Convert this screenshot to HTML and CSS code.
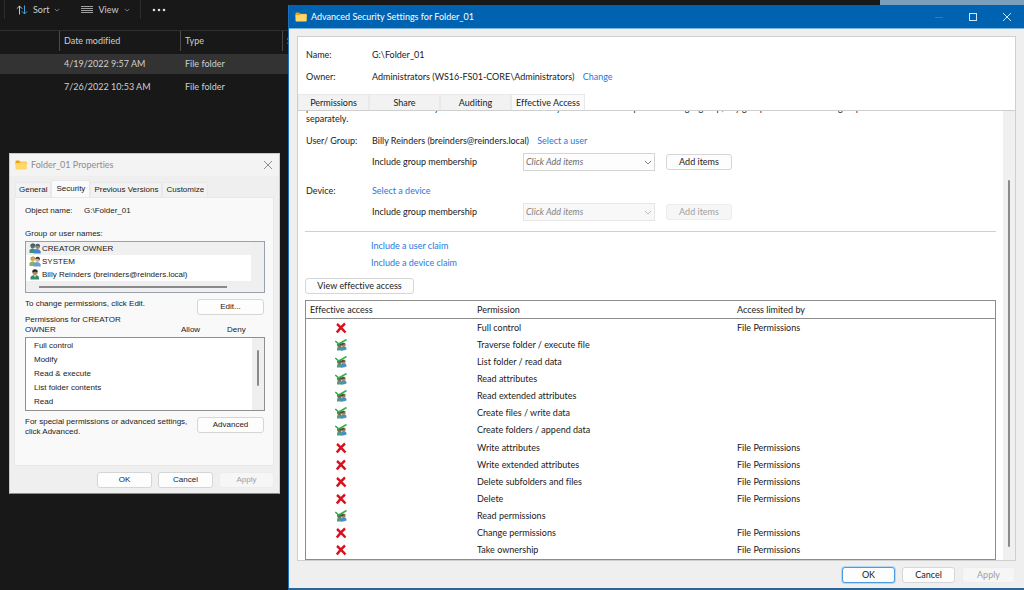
FILE: index.html
```html
<!DOCTYPE html>
<html lang="en">
<head>
  <meta charset="UTF-8">
  <meta name="viewport" content="width=device-width, initial-scale=1.0">
  <title>Advanced Security Settings for Folder_01</title>
  <link rel="stylesheet" href="styles.css">
</head>
<body>
  <!-- Shared icons -->
  <svg class="icon-defs" aria-hidden="true">
    <symbol id="icon-folder" viewBox="0 0 12 10">
      <path d="M0.5 1.2Q0.5 0.5 1.2 0.5H4L5.3 1.8H11Q11.7 1.8 11.7 2.5V5H0.5Z" fill="#e8a317"/>
      <path d="M0.5 3H4.3L5.4 2.3H11Q11.7 2.3 11.7 3V8.8Q11.7 9.5 11 9.5H1.2Q0.5 9.5 0.5 8.8Z" fill="#ffd766"/>
    </symbol>
    <symbol id="icon-close" viewBox="0 0 10 10">
      <path d="M1 1L9 9M9 1L1 9" fill="none" stroke="currentColor" stroke-width="1"/>
    </symbol>
    <symbol id="icon-chevron" viewBox="0 0 8 5">
      <path d="M1 1L4 4L7 1" fill="none" stroke="currentColor" stroke-width="1"/>
    </symbol>
    <symbol id="icon-denied" viewBox="0 0 12 12">
      <path d="M2 2Q5 4.500 10.500 10.500M10 1.500Q6 5 1.800 10.500" fill="none" stroke="#d9101e" stroke-width="2.400"/>
    </symbol>
    <symbol id="icon-allowed" viewBox="0 0 12 12">
      <path d="M2 11.500V9.500Q2 7.500 4.500 7.500T7.500 9.500V11.500Z" fill="#4f9c86"/>
      <path d="M6 11.500V9.500Q6.500 7 9 7.200T11.500 9.500V10.500Q9 11.800 6 11.500Z" fill="#4a8fc7"/>
      <circle cx="4.500" cy="6" r="2.300" fill="#7d6c50"/>
      <circle cx="8.500" cy="5.800" r="2.200" fill="#a3835f"/>
      <path d="M2.300 5.500Q4 3.200 6.500 4.500Q8.500 3.500 10.500 5Q8.500 5.200 7 6.300Q5 5 2.300 6.500Z" fill="#4a4a40"/>
      <path d="M0.300 2L3.800 5L11.500 0.500" fill="none" stroke="#2fb04a" stroke-width="1.600"/>
    </symbol>
    <symbol id="icon-group-blue" viewBox="0 0 12 11">
      <path d="M0.500 10V7.500Q1 5.500 3.500 5.500T6.500 7.500V10Z" fill="#3f8f74"/>
      <path d="M4.500 10.500V8.500Q5 6 8 6T11.700 8.500V10.500Z" fill="#3f87cc"/>
      <circle cx="3.700" cy="3" r="2.400" fill="#5b6f6c"/>
      <circle cx="8.600" cy="3.500" r="2.400" fill="#8a8584"/>
      <path d="M1.300 3Q1.500 0.500 4 0.500T6 3Q4 1.800 1.300 3ZM6.200 3Q6.500 0.800 8.700 0.800T11 3.500Q9 2.200 6.200 3Z" fill="#4a5a66"/>
    </symbol>
    <symbol id="icon-group" viewBox="0 0 12 11">
      <path d="M0.500 10V7.500Q1 5.500 3.500 5.500T6.500 7.500V10Z" fill="#8db05a"/>
      <path d="M4.500 10.500V8.500Q5 6 8 6T11.700 8.500V10.500Z" fill="#6f9fd0"/>
      <circle cx="3.700" cy="3" r="2.400" fill="#d0aa72"/>
      <circle cx="8.600" cy="3.500" r="2.400" fill="#d3ab8c"/>
      <path d="M1.300 3Q1.500 0.500 4 0.500T6 3Q4 1.800 1.300 3Z" fill="#c4a04a"/>
      <path d="M6.200 3Q6.500 0.800 8.700 0.800T11 4Q9 2.200 6.200 3Z" fill="#3d3835"/>
    </symbol>
    <symbol id="icon-user" viewBox="0 0 12 11">
      <path d="M1.500 10.500V8.500Q2 6 5.800 6T10 8.500V10.500Z" fill="#2f8f68"/>
      <path d="M5 6H7L6 8.500Z" fill="#eef4f0"/>
      <circle cx="6" cy="3.400" r="2.500" fill="#a88468"/>
      <path d="M3.300 3.500Q3 0.300 6 0.300T8.600 3.500Q7 2 3.300 3.500Z" fill="#2c2a28"/>
    </symbol>
  </svg>

  <main class="explorer">
    <div class="explorer-toolbar">
      <button class="tool" type="button">
        <svg class="sort-icon" viewBox="0 0 12 10">
          <path d="M3.500 9.500V1M0.800 3.700L3.500 1L6.200 3.700" fill="none" stroke="#c8c8c8"/>
          <path d="M8.500 0.500V9M5.800 6.300L8.500 9L11.200 6.300" fill="none" stroke="#3fa3d8"/>
        </svg>
        Sort
        <svg class="chevron"><use href="#icon-chevron"/></svg>
      </button>
      <button class="tool" type="button">
        <svg class="view-icon" viewBox="0 0 12 10">
          <path d="M0 1.500H12M0 3.500H12M0 5.500H12M0 7.500H12" stroke="#b0b0b0" stroke-width="0.900"/>
        </svg>
        View
        <svg class="chevron"><use href="#icon-chevron"/></svg>
      </button>
      <button class="tool more" type="button" aria-label="See more">
        <svg class="more-icon" viewBox="0 0 14 4" fill="#ddd">
          <circle cx="2" cy="2" r="1.300"/><circle cx="7" cy="2" r="1.300"/><circle cx="12" cy="2" r="1.300"/>
        </svg>
      </button>
    </div>
    <div class="file-row file-header">
      <span></span><span>Date modified</span><span>Type</span><span>Size</span>
    </div>
    <div class="file-row selected">
      <span></span><span>4/19/2022 9:57 AM</span><span>File folder</span>
    </div>
    <div class="file-row">
      <span></span><span>7/26/2022 10:53 AM</span><span>File folder</span>
    </div>
  </main>

  <section class="window properties" aria-label="Folder_01 Properties">
    <header class="titlebar">
      <svg class="folder-icon"><use href="#icon-folder"/></svg>
      <span class="window-title">Folder_01 Properties</span>
      <button class="caption" type="button" aria-label="Close"><svg><use href="#icon-close"/></svg></button>
    </header>
    <div class="tabs" role="tablist">
      <button class="tab" type="button" role="tab">General</button>
      <button class="tab active" type="button" role="tab" aria-selected="true">Security</button>
      <button class="tab" type="button" role="tab">Previous Versions</button>
      <button class="tab" type="button" role="tab">Customize</button>
    </div>
    <div class="props-panel">
      <div class="object-name"><span>Object name:</span><span>G:\Folder_01</span></div>
      <div class="group-label">Group or user names:</div>
      <div class="group-box">
        <ul class="group-list">
          <li class="selected"><svg><use href="#icon-group-blue"/></svg>CREATOR OWNER</li>
          <li><svg><use href="#icon-group"/></svg>SYSTEM</li>
          <li><svg><use href="#icon-user"/></svg>Billy Reinders (breinders@reinders.local)</li>
        </ul>
        <div class="h-thumb"></div>
      </div>
      <div class="split">
        <p>To change permissions, click Edit.</p>
        <button class="btn" type="button">Edit...</button>
      </div>
      <div class="perm-head">
        <span class="perm-for">Permissions for CREATOR OWNER</span>
        <span>Allow</span>
        <span>Deny</span>
      </div>
      <div class="perm-box">
        <ul class="perm-list">
          <li>Full control</li>
          <li>Modify</li>
          <li>Read &amp; execute</li>
          <li>List folder contents</li>
          <li>Read</li>
        </ul>
        <div class="perm-scroll"><div class="v-thumb"></div></div>
      </div>
      <div class="split">
        <p>For special permissions or advanced settings, click Advanced.</p>
        <button class="btn" type="button">Advanced</button>
      </div>
    </div>
    <footer class="window-buttons">
      <button class="btn" type="button">OK</button>
      <button class="btn" type="button">Cancel</button>
      <button class="btn" type="button" disabled>Apply</button>
    </footer>
  </section>

  <section class="window advanced" aria-label="Advanced Security Settings for Folder_01">
    <header class="titlebar">
      <svg class="folder-icon"><use href="#icon-folder"/></svg>
      <span class="window-title">Advanced Security Settings for Folder_01</span>
      <button class="caption" type="button" aria-label="Minimize" disabled>
        <svg viewBox="0 0 10 10"><path d="M1 5.500H9" stroke="currentColor"/></svg>
      </button>
      <button class="caption" type="button" aria-label="Maximize">
        <svg viewBox="0 0 10 10"><rect x="1.500" y="1.500" width="7" height="7" fill="none" stroke="currentColor"/></svg>
      </button>
      <button class="caption" type="button" aria-label="Close"><svg><use href="#icon-close"/></svg></button>
    </header>
    <div class="adv-panel">
      <dl class="summary">
        <dt>Name:</dt>
        <dd>G:\Folder_01</dd>
        <dt>Owner:</dt>
        <dd>Administrators (WS16-FS01-CORE\Administrators) <a href="#">Change</a></dd>
      </dl>
      <div class="tabs" role="tablist">
        <button class="tab" type="button" role="tab">Permissions</button>
        <button class="tab" type="button" role="tab">Share</button>
        <button class="tab" type="button" role="tab">Auditing</button>
        <button class="tab active" type="button" role="tab" aria-selected="true">Effective Access</button>
      </div>
      <div class="scroll-area">
        <div class="scroll-content">
          <p class="intro">potential additions to the security token for the account. When you evaluate the impact of adding a group, any group that the intended group is a member of must be added<br>separately.</p>

          <div class="principal">
            <span>User/ Group:</span>
            <div>Billy Reinders (breinders@reinders.local) <a href="#">Select a user</a></div>
          </div>
          <div class="membership">
            <label for="user-groups">Include group membership</label>
            <span class="combo">
              <select id="user-groups"><option>Click Add items</option></select>
              <svg><use href="#icon-chevron"/></svg>
            </span>
            <button class="btn" type="button">Add items</button>
          </div>
          <div class="principal">
            <span>Device:</span>
            <div><a href="#">Select a device</a></div>
          </div>
          <div class="membership">
            <label for="device-groups">Include group membership</label>
            <span class="combo">
              <select id="device-groups" disabled><option>Click Add items</option></select>
              <svg><use href="#icon-chevron"/></svg>
            </span>
            <button class="btn" type="button" disabled>Add items</button>
          </div>

          <div class="claims">
            <a href="#">Include a user claim</a>
            <a href="#">Include a device claim</a>
          </div>

          <button class="btn view-access" type="button">View effective access</button>

          <table class="access-table">
            <thead>
              <tr><th>Effective access</th><th>Permission</th><th>Access limited by</th></tr>
            </thead>
            <tbody>
              <tr><td><svg><use href="#icon-denied"/></svg></td><td>Full control</td><td>File Permissions</td></tr>
              <tr><td><svg><use href="#icon-allowed"/></svg></td><td>Traverse folder / execute file</td><td></td></tr>
              <tr><td><svg><use href="#icon-allowed"/></svg></td><td>List folder / read data</td><td></td></tr>
              <tr><td><svg><use href="#icon-allowed"/></svg></td><td>Read attributes</td><td></td></tr>
              <tr><td><svg><use href="#icon-allowed"/></svg></td><td>Read extended attributes</td><td></td></tr>
              <tr><td><svg><use href="#icon-allowed"/></svg></td><td>Create files / write data</td><td></td></tr>
              <tr><td><svg><use href="#icon-allowed"/></svg></td><td>Create folders / append data</td><td></td></tr>
              <tr><td><svg><use href="#icon-denied"/></svg></td><td>Write attributes</td><td>File Permissions</td></tr>
              <tr><td><svg><use href="#icon-denied"/></svg></td><td>Write extended attributes</td><td>File Permissions</td></tr>
              <tr><td><svg><use href="#icon-denied"/></svg></td><td>Delete subfolders and files</td><td>File Permissions</td></tr>
              <tr><td><svg><use href="#icon-denied"/></svg></td><td>Delete</td><td>File Permissions</td></tr>
              <tr><td><svg><use href="#icon-allowed"/></svg></td><td>Read permissions</td><td></td></tr>
              <tr><td><svg><use href="#icon-denied"/></svg></td><td>Change permissions</td><td>File Permissions</td></tr>
              <tr><td><svg><use href="#icon-denied"/></svg></td><td>Take ownership</td><td>File Permissions</td></tr>
            </tbody>
          </table>
        </div>
        <div class="scrollbar"><div class="v-thumb"></div></div>
      </div>
    </div>
    <footer class="window-buttons">
      <button class="btn default" type="button">OK</button>
      <button class="btn" type="button">Cancel</button>
      <button class="btn" type="button" disabled>Apply</button>
    </footer>
  </section>
</body>
</html>
```
FILE: styles.css
```css
* {
  margin: 0;
  padding: 0;
  box-sizing: border-box;
}

body {
  position: relative;
  min-height: 100vh;
  overflow: hidden;
  background: linear-gradient(#7a9fbc, #7a9fbc) 880px 0 / 100% 5px no-repeat #181818;
  color: #1a1a1a;
  font: 9px/12px Lato, "Open Sans", sans-serif;
  font-variant-ligatures: none;
}

button,
select {
  font: inherit;
  font-variant-ligatures: none;
  color: inherit;
}

a {
  color: #1f78de;
  text-decoration: none;
}

ul {
  list-style: none;
}

svg {
  display: block;
  flex: none;
}

.icon-defs {
  position: absolute;
  width: 0;
  height: 0;
}

/* Explorer behind the dialogs */
.explorer {
  color: #cfcfcf;
}

.explorer-toolbar {
  display: flex;
  height: 31px;
  padding: 0 0 11px 4px;
  border-bottom: 1px solid #303030;
}

.tool {
  display: flex;
  align-items: center;
  gap: 5px;
  padding: 0 10px 0 11px;
  background: none;
  border: 0;
}

.tool:first-child {
  border-left: 1px solid #2c2c2c;
}

.tool.more {
  border-left: 1px solid #2c2c2c;
}

.tool .chevron {
  width: 6px;
  height: 4px;
  color: #9a9a9a;
}

.sort-icon,
.view-icon {
  width: 12px;
  height: 10px;
}

.more-icon {
  width: 14px;
  height: 4px;
}

.file-row {
  display: grid;
  grid-template-columns: 59px 121px 102px 1fr;
  align-items: center;
  height: 20px;
  margin-bottom: 3px;
}

.file-row span {
  padding-left: 5px;
}

.file-header {
  align-items: stretch;
  line-height: 19px;
}

.file-header span + span {
  border-left: 1px solid #4a4a4a;
  padding-left: 4px;
}

.file-row.selected {
  background: #333;
}

/* Windows */
.window {
  position: absolute;
  background: #efefef;
}

.titlebar {
  display: flex;
  align-items: center;
}

.folder-icon {
  width: 12px;
  height: 10px;
}

.window-title {
  flex: 1;
  padding-left: 4px;
}

.caption {
  display: flex;
  align-items: center;
  justify-content: center;
  background: none;
  border: 0;
}

.caption svg {
  width: 10px;
  height: 10px;
}

.tabs {
  display: flex;
  align-items: flex-end;
}

.tab {
  background: #f2f2f2;
  border: 1px solid #e9e9e9;
  border-bottom: 0;
  white-space: nowrap;
}

.tab.active {
  background: #fafafa;
}

.btn {
  flex: none;
  height: 16px;
  line-height: 14px;
  background: #fdfdfd;
  border: 1px solid #d6d6d6;
  border-radius: 3px;
  text-align: center;
}

.btn.default {
  border-color: #4a9be0;
  box-shadow: 0 0 0 1px #b5d8f3;
}

.btn:disabled {
  background: #f6f6f6;
  border-color: #ececec;
  color: #a0a0a0;
}

.window-buttons {
  display: flex;
  justify-content: flex-end;
}

.v-thumb {
  width: 2px;
  background: #8a8a8a;
  border-radius: 1px;
}

/* Properties dialog */
.properties {
  left: 9px;
  top: 153px;
  width: 271px;
  border: 1px solid #c9c9c9;
  border-bottom-color: #8a8a8a;
  font: 8px/10px "Liberation Sans", Arial, sans-serif;
}

.properties .titlebar {
  height: 22px;
  padding: 0 6px 0 5px;
  background: #f3f3f3;
  color: #8d8d8d;
  font: 9px/12px Lato, "Open Sans", sans-serif;
  font-variant-ligatures: none;
}

.properties .tabs {
  padding: 4px 5px 0;
}

.properties .tab {
  height: 15px;
  padding: 0 3px;
}

.properties .tab.active {
  height: 17px;
  padding: 0 4px;
}

.props-panel {
  margin: 0 5px 0 4px;
  padding: 8px 8px 28px 10px;
  background: #f9f9f9;
  border: 1px solid #e8e8e8;
}

.object-name {
  display: grid;
  grid-template-columns: 59px 1fr;
}

.group-label {
  margin: 13px 0 2px;
}

.group-box {
  height: 52px;
  padding-right: 13px;
  background: #efefef;
  border: 1px solid #9aa0aa;
}

.group-list li {
  display: flex;
  align-items: center;
  gap: 1px;
  height: 13px;
  padding-left: 3px;
  background: #fff;
}

.group-list li.selected {
  background: #f0f0f0;
}

.group-list svg {
  width: 12px;
  height: 11px;
}

.h-thumb {
  height: 2px;
  margin: 5px 24px 0 13px;
  background: #8a8a8a;
}

.split {
  display: flex;
  justify-content: space-between;
  align-items: flex-start;
  margin-top: 6px;
  padding-right: 1px;
}

.split .btn {
  width: 67px;
}

.perm-head {
  display: grid;
  grid-template-columns: 1fr 46px 38px;
  align-items: end;
  margin-bottom: 2px;
}

.perm-for {
  width: 110px;
}

.perm-box {
  display: flex;
  border: 1px solid #8f8f8f;
  background: #fff;
}

.perm-list {
  flex: 1;
  padding: 1px 0 1px 8px;
  line-height: 14px;
}

.perm-scroll {
  width: 12px;
  padding: 12px 0 0 5px;
  background: #efefef;
}

.perm-scroll .v-thumb {
  height: 36px;
}

.properties .window-buttons {
  gap: 6px;
  padding: 6px 5px 5px;
}

.properties .window-buttons .btn {
  width: 55px;
}

/* Advanced security dialog */
.advanced {
  left: 288px;
  right: 0;
  top: 5px;
  border-left: 1px solid #1c6fb8;
  border-bottom: 2px solid #2d6596;
}

.advanced .titlebar {
  height: 24px;
  padding-left: 6px;
  background: #0063b1;
  border-bottom: 1px solid #7db4dd;
  color: #fff;
}

.advanced .caption {
  width: 34px;
  color: #d5e6f4;
}

.advanced .caption:disabled {
  color: #2f7dc0;
}

.adv-panel {
  margin: 7px 8px 0;
  background: #fff;
  border: 1px solid #cfcfcf;
}

.summary {
  display: grid;
  grid-template-columns: 66px 1fr;
  row-gap: 10px;
  padding: 12px 8px 11px;
}

.summary a,
.principal a {
  margin-left: 6px;
}

.advanced .tab {
  width: 71px;
  height: 16px;
}

.advanced .tab.active {
  width: 74px;
}

.scroll-area {
  display: flex;
  border-top: 1px solid #cfcfcf;
}

.scroll-content {
  flex: 1;
  overflow: hidden;
  padding: 0 7px;
}

.intro {
  margin: -9px 0 11px 1px;
  line-height: 11px;
  white-space: nowrap;
}

.principal {
  display: grid;
  grid-template-columns: 66px 1fr;
  padding-left: 1px;
}

.membership {
  display: flex;
  align-items: center;
  margin-top: 6px;
  padding-left: 67px;
}

.membership + .principal {
  margin-top: 14px;
}

.membership + .principal a {
  margin-left: 0;
}

.membership label {
  width: 151px;
}

.membership .btn {
  width: 66px;
  margin-left: 11px;
}

.combo {
  position: relative;
  width: 132px;
}

.combo select {
  display: block;
  width: 100%;
  height: 18px;
  padding-left: 2px;
  appearance: none;
  background: #fdfdfd;
  border: 1px solid #d4d4d4;
  color: #6d6d6d;
  font-style: italic;
}

.combo select:disabled {
  background: #f8f8f8;
  border-color: #e6e6e6;
  opacity: 1;
  color: #858585;
}

.combo svg {
  position: absolute;
  right: 3px;
  top: 7px;
  width: 8px;
  height: 5px;
  color: #808080;
  pointer-events: none;
}

.combo select:disabled + svg {
  color: #bdbdbd;
}

.claims {
  display: flex;
  flex-direction: column;
  align-items: flex-start;
  gap: 5px;
  margin-top: 10px;
  padding: 8px 0 9px 66px;
  border-top: 1px solid #cfcfcf;
}

.view-access {
  width: 109px;
}

.access-table {
  width: 100%;
  height: 260px;
  margin-top: 6px;
  border: 1px solid #8c8c8c;
  border-spacing: 0;
  table-layout: fixed;
}

.access-table th {
  height: 18px;
  padding-left: 4px;
  border-bottom: 1px solid #8c8c8c;
  font-weight: normal;
  text-align: left;
}

.access-table th:first-child {
  width: 167px;
}

.access-table th:nth-child(2) {
  width: 260px;
}

.access-table td {
  padding-left: 4px;
}

.access-table td:first-child {
  padding-left: 29px;
}

.access-table td svg {
  width: 12px;
  height: 12px;
}

.scrollbar {
  width: 12px;
  padding: 69px 0 13px 5px;
  background: #f0f0f0;
}

.scrollbar .v-thumb {
  height: 100%;
}

.advanced .window-buttons {
  gap: 7px;
  padding: 6px 9px 5px;
}

.advanced .window-buttons .btn {
  width: 53px;
}
```
